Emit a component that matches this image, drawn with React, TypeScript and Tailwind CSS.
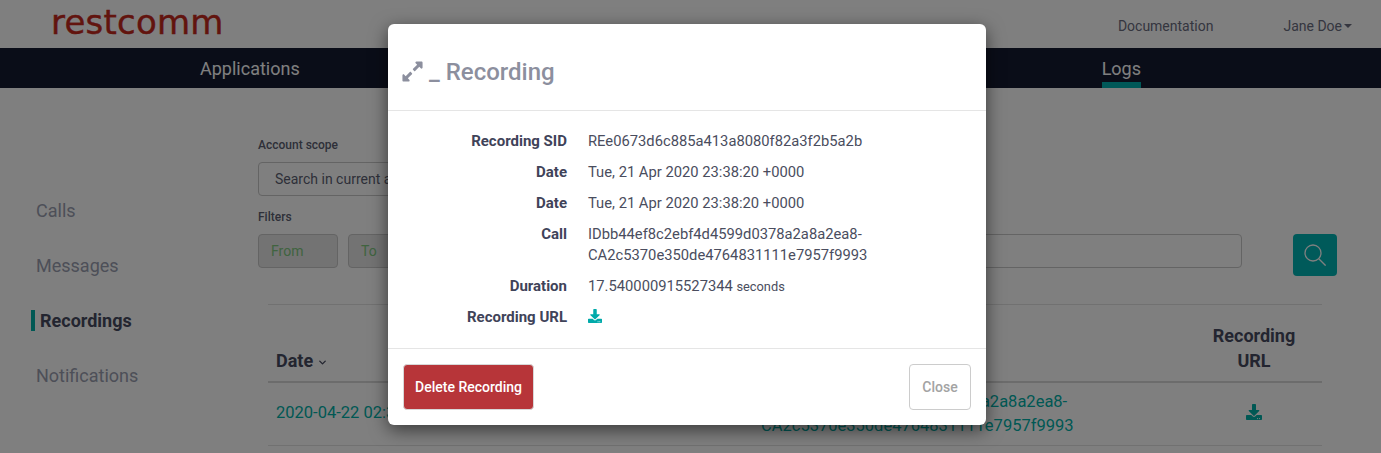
import { FaDownload, FaExpandAlt } from "react-icons/fa";
import { ChevronDown } from "lucide-react";

const sideLinks = ["Calls", "Messages", "Recordings", "Notifications"];

const details = [
  { label: "Recording SID", value: "REe0673d6c885a413a8080f82a3f2b5a2b" },
  { label: "Date", value: "Tue, 21 Apr 2020 23:38:20 +0000" },
  { label: "Date", value: "Tue, 21 Apr 2020 23:38:20 +0000" },
  { label: "Call", value: "IDbb44ef8c2ebf4d4599d0378a2a8a2ea8-CA2c5370e350de4764831111e7957f9993" },
];

function Header() {
  return (
    <header className="flex h-12 items-center bg-white pl-[51px] pr-[29px]">
      <span className="-mt-[5px] font-['DejaVu_Sans',sans-serif] text-[34px] leading-none tracking-[0.2px] text-[#c4281c] [-webkit-text-stroke:0.4px_#c4281c]">restcomm</span>
      <a className="ml-auto pt-1 text-sm text-[#6a6c7e]">Documentation</a>
      <a className="ml-[70px] flex items-center pt-1 text-sm text-[#6a6c7e]">
        Jane Doe
        <span className="ml-[2px] h-0 w-0 border-x-[4px] border-t-[4px] border-x-transparent border-t-[#6a6c7e]" />
      </a>
    </header>
  );
}

function NavBar() {
  return (
    <nav className="flex h-10 justify-between bg-[#141a30] pl-[200px] pr-[240px] text-lg text-white">
      <a className="flex items-center pt-[2px]">Applications</a>
      <a className="flex items-center border-b-[6px] border-[#00b0b0] pt-2">Logs</a>
    </nav>
  );
}

function SideMenu() {
  return (
    <aside className="w-[258px] shrink-0 pl-[31px] pt-[95px]">
      {sideLinks.map((link) =>
        link === "Recordings" ? (
          <div key={link} className="flex h-[55px] items-center">
            <span className="flex h-[21px] items-center border-l-4 border-[#00b0a8] pl-[5px] text-lg font-bold text-[#474b60]">{link}</span>
          </div>
        ) : (
          <div key={link} className="flex h-[55px] items-center pl-[5px] text-lg text-[#9a9eb0]">
            {link}
          </div>
        )
      )}
    </aside>
  );
}

function Filters() {
  return (
    <div>
      <label className="mb-2 block text-xs font-medium leading-[18px] text-[#5c5f72]">Account scope</label>
      <div className="flex h-[34px] w-[400px] items-center rounded border border-[#c8c8c8] pl-4 text-sm text-[#5c5f72]">
        Search in current account
      </div>
      <label className="mb-2 mt-3 block text-xs font-medium leading-[18px] text-[#5c5f72]">Filters</label>
      <div className="flex items-start">
        <div className="flex h-[34px] w-20 items-center rounded border border-[#c8c8c8] bg-[#e6e6e6] pl-3 text-sm text-[#80c880]">From</div>
        <div className="ml-[10px] flex h-[34px] w-20 items-center rounded border border-[#c8c8c8] bg-[#e6e6e6] pl-3 text-sm text-[#80c880]">To</div>
        <div className="ml-[10px] h-[34px] w-[804px] rounded border border-[#c8c8c8]" />
        <button className="ml-[51px] flex h-[42px] w-11 items-center justify-center rounded bg-[#00b4b4] text-white">
          <svg width="22" height="22" viewBox="0 0 22 22" fill="none" stroke="currentColor" strokeWidth="1.3">
            <circle cx="9" cy="9" r="8" />
            <path d="M14.8 14.8 21.6 21.6" />
          </svg>
        </button>
      </div>
    </div>
  );
}

function RecordingsTable() {
  return (
    <table className="ml-[10px] mt-[28px] w-[1054px] table-fixed border-t border-[#e2e2e2] text-[16.5px]">
      <thead>
        <tr className="h-[77px] border-b-2 border-[#d8d8d8] text-lg text-[#474b60]">
          <th className="w-[485px] px-2 pb-[6px] align-bottom text-left font-bold">
            <span className="inline-flex items-center">
              Date
              <ChevronDown size={11} strokeWidth={3} className="ml-1 mt-[3px]" />
            </span>
          </th>
          <th className="w-[433px] px-2 pb-[6px] align-bottom text-left font-bold">Call</th>
          <th className="w-[136px] px-2 pb-[8px] align-bottom text-center font-bold leading-[25px]">Recording URL</th>
        </tr>
      </thead>
      <tbody>
        <tr className="h-[64px] border-b border-[#e2e2e2] text-[#00b0a8]">
          <td className="px-2">2020-04-22 02:38:20</td>
          <td className="px-2 leading-6">
            <span className="block">IDbb44ef8c2ebf4d4599d0378a2a8a2ea8-</span>
            <span className="block">CA2c5370e350de4764831111e7957f9993</span>
          </td>
          <td className="px-2">
            <FaDownload size={16} className="mx-auto -mt-[4px]" />
          </td>
        </tr>
      </tbody>
    </table>
  );
}

function RecordingModal() {
  return (
    <div className="absolute inset-0 bg-black/50 pl-[388px] pt-6">
      <div className="flex h-[401px] w-[598px] flex-col rounded-md bg-white shadow-[0_5px_18px_rgba(0,0,0,0.55)]">
        <div className="flex h-[87px] shrink-0 items-center border-b border-[#e5e5e5] pl-[14px] pt-[9px] text-2xl font-medium text-[#8c8f9e]">
          <FaExpandAlt size={23} className="shrink-0 -ml-[1px]" />
          <span className="ml-[5px]">_ Recording</span>
        </div>
        <div className="flex-1 pt-5 text-[14.75px] text-[#4a4d5e]">
          {details.map((row, i) => (
            <div key={i} className="mb-[10px] flex leading-[21px]">
              <div className="w-[179px] shrink-0 text-right text-[15px] font-bold text-[#3f4359]">{row.label}</div>
              <div className="ml-[21px] w-[300px]">{row.value}</div>
            </div>
          ))}
          <div className="mb-[10px] flex leading-[21px]">
            <div className="w-[179px] shrink-0 text-right text-[15px] font-bold text-[#3f4359]">Duration</div>
            <div className="ml-[21px]">
              17.540000915527344 <span className="text-[12.8px]">seconds</span>
            </div>
          </div>
          <div className="flex leading-[21px]">
            <div className="w-[179px] shrink-0 text-right text-[15px] font-bold text-[#3f4359]">Recording URL</div>
            <div className="ml-[21px] flex items-center pb-[3px] text-[#00aaaa]">
              <FaDownload size={14} />
            </div>
          </div>
        </div>
        <div className="flex h-[77px] shrink-0 items-center justify-between border-t border-[#e5e5e5] px-[15px]">
          <button className="h-[46px] w-[131px] rounded border border-[#d8d8d8] bg-[#b73539] text-sm font-medium text-white">Delete Recording</button>
          <button className="h-[46px] w-[62px] rounded border border-[#cccccc] bg-white text-sm font-medium text-[#a3a3a3]">Close</button>
        </div>
      </div>
    </div>
  );
}

export default function App() {
  return (
    <div className="relative h-[453px] overflow-hidden bg-white font-['Roboto',sans-serif]">
      <Header />
      <NavBar />
      <div className="flex">
        <SideMenu />
        <main className="flex-1 pt-12">
          <Filters />
          <RecordingsTable />
        </main>
      </div>
      <RecordingModal />
    </div>
  );
}
